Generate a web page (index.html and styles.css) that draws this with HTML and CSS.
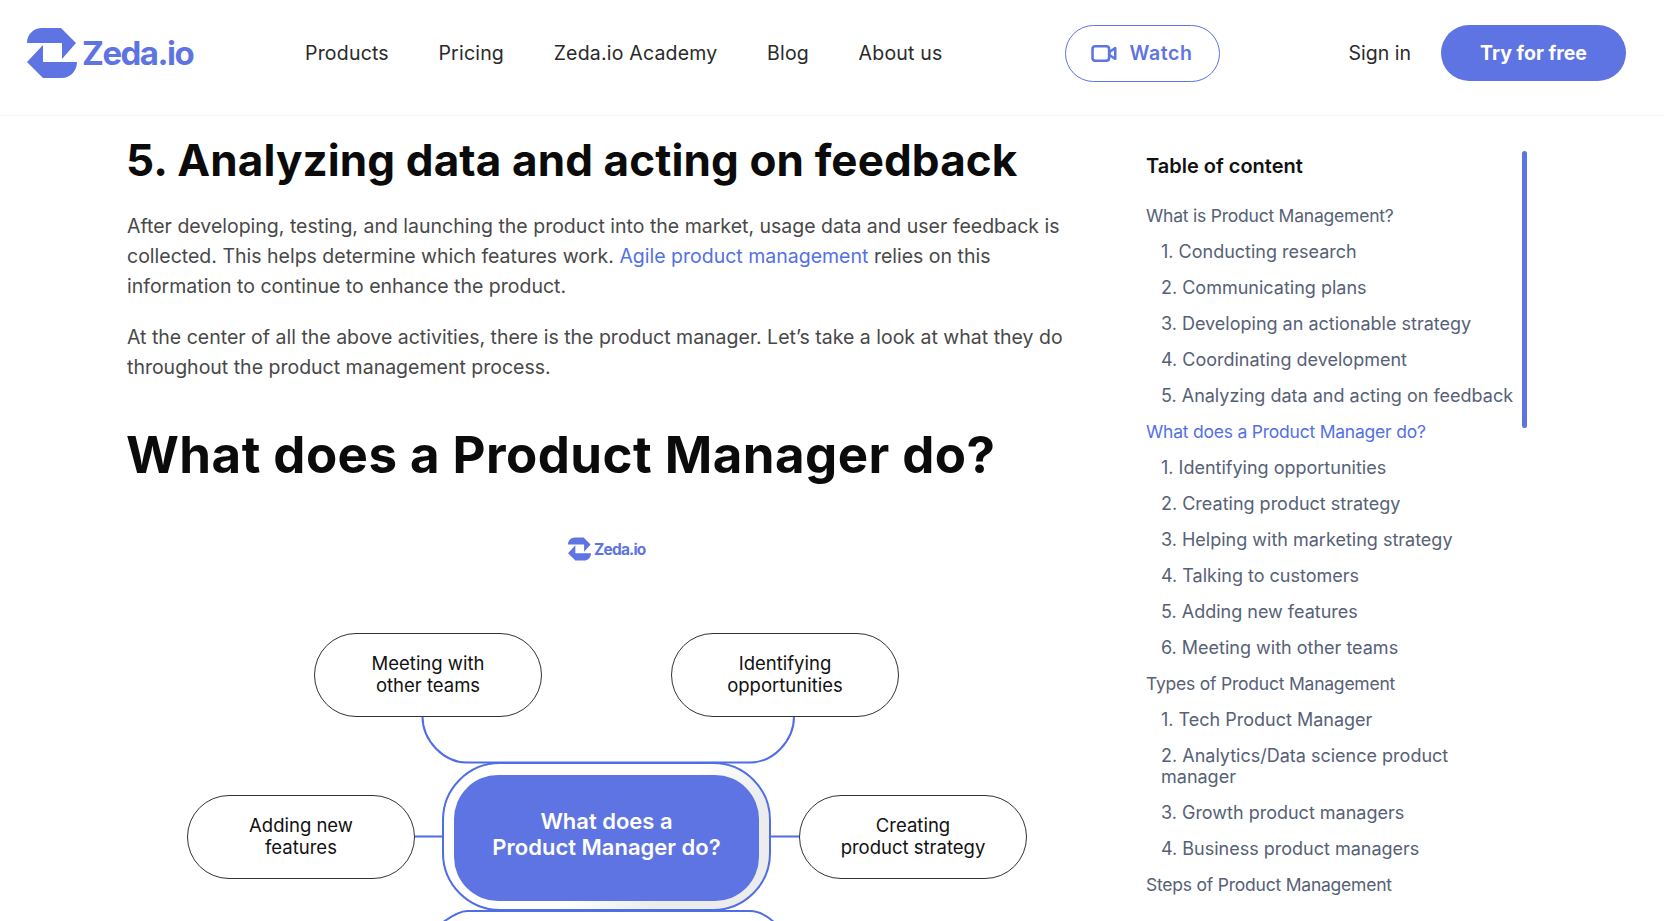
FILE: index.html
```html
<!DOCTYPE html>
<html lang="en">
<head>
<meta charset="utf-8">
<title>What does a Product Manager do? | Zeda.io</title>
<link rel="stylesheet" href="styles.css">
</head>
<body>
<header class="topbar">
  <a class="brand" href="#">
    <svg class="brand-mark" viewBox="0 0 50 50" aria-hidden="true"><path d="M0 15C0 6 7 0 15 0H34L49 15L35 31V15Z"/><path d="M50 34C50 43 43 50 35 50H16L0 34L16 17V34Z"/></svg>
    <span class="brand-name">Zeda.io</span>
  </a>
  <nav class="nav">
    <a href="#">Products</a>
    <a href="#">Pricing</a>
    <a href="#">Zeda.io Academy</a>
    <a href="#">Blog</a>
    <a href="#">About us</a>
  </nav>
  <a class="watch" href="#">
    <svg class="watch-icon" viewBox="0 0 24 16" aria-hidden="true"><rect x="1.2" y="1.2" width="15.6" height="13.6" rx="2.6"/><path d="M17 6.6L22.6 3V13L17 9.4Z"/></svg>
    Watch
  </a>
  <a class="signin" href="#">Sign in</a>
  <a class="try" href="#">Try for free</a>
</header>

<div class="page">
  <main class="article">
    <h3>5. Analyzing data and acting on feedback</h3>
    <p>After developing, testing, and launching the product into the market, usage data and user feedback is<br>collected. This helps determine which features work. <a href="#">Agile product management</a> relies on this<br>information to continue to enhance the product.</p>
    <p>At the center of all the above activities, there is the product manager. Let’s take a look at what they do<br>throughout the product management process.</p>
    <h2>What does a Product Manager do?</h2>
    <figure class="diagram">
      <div class="mini-brand">
        <svg class="mini-mark" viewBox="0 0 50 50" aria-hidden="true"><path d="M0 15C0 6 7 0 15 0H34L49 15L35 31V15Z"/><path d="M50 34C50 43 43 50 35 50H16L0 34L16 17V34Z"/></svg>
        <span class="mini-name">Zeda.io</span>
      </div>
      <svg class="links" viewBox="0 0 900 391" aria-hidden="true">
        <path d="M295.5 186.5C295.5 211 317 232.5 340 232.5H623C646 232.5 667 211 667 186.5"/>
        <path d="M287 306.5H316"/>
        <path d="M643 306.5H673"/>
        <path d="M312 395C318 391 330 381 340 381H623C633 381 643 388 650 395"/>
      </svg>
      <div class="halo"></div>
      <div class="hub">What does a<br>Product Manager do?</div>
      <div class="pill pill-meeting">Meeting with<br>other teams</div>
      <div class="pill pill-identify">Identifying<br>opportunities</div>
      <div class="pill pill-adding">Adding new<br>features</div>
      <div class="pill pill-creating">Creating<br>product strategy</div>
    </figure>
  </main>

  <aside class="toc">
    <div class="toc-thumb"></div>
    <h4>Table of content</h4>
    <ul>
      <li><a href="#">What is Product Management?</a></li>
      <li class="sub"><a href="#">1. Conducting research</a></li>
      <li class="sub"><a href="#">2. Communicating plans</a></li>
      <li class="sub"><a href="#">3. Developing an actionable strategy</a></li>
      <li class="sub"><a href="#">4. Coordinating development</a></li>
      <li class="sub"><a href="#">5. Analyzing data and acting on feedback</a></li>
      <li class="active"><a href="#">What does a Product Manager do?</a></li>
      <li class="sub"><a href="#">1. Identifying opportunities</a></li>
      <li class="sub"><a href="#">2. Creating product strategy</a></li>
      <li class="sub"><a href="#">3. Helping with marketing strategy</a></li>
      <li class="sub"><a href="#">4. Talking to customers</a></li>
      <li class="sub"><a href="#">5. Adding new features</a></li>
      <li class="sub"><a href="#">6. Meeting with other teams</a></li>
      <li><a href="#">Types of Product Management</a></li>
      <li class="sub"><a href="#">1. Tech Product Manager</a></li>
      <li class="sub"><a href="#">2. Analytics/Data science product<br>manager</a></li>
      <li class="sub"><a href="#">3. Growth product managers</a></li>
      <li class="sub"><a href="#">4. Business product managers</a></li>
      <li><a href="#">Steps of Product Management</a></li>
    </ul>
  </aside>
</div>
</body>
</html>
```

FILE: styles.css
```css
* { box-sizing: border-box; }
html, body { margin: 0; height: 100%; overflow: hidden; background: #fff; }
body { font-family: Inter, "Noto Sans", Arial, sans-serif; color: #222; }
a { color: inherit; text-decoration: none; }

.topbar {
  height: 116px;
  display: flex;
  align-items: center;
  padding: 0 38px 9px 27px;
  border-bottom: 1px solid #f5f5f5;
  font-size: 19.5px;
}
.brand { display: flex; align-items: center; gap: 5px; width: 278px; }
.brand-mark { width: 50px; height: 50px; fill: #5e74e2; }
.brand-name { font-size: 33px; font-weight: 700; letter-spacing: -1.5px; color: #5e74e2; }
.nav { display: flex; gap: 49.6px; color: #2a2a2a; letter-spacing: .2px; }
.watch {
  margin-left: 122px;
  width: 155px;
  height: 57px;
  display: flex;
  align-items: center;
  justify-content: center;
  gap: 12px;
  border: 1px solid #5e74e2;
  border-radius: 29px;
  color: #5e74e2;
  font-weight: 600;
  letter-spacing: .6px;
}
.watch-icon { width: 26px; height: 17px; fill: none; stroke: #5e74e2; stroke-width: 2.4; stroke-linejoin: round; }
.signin { margin-left: auto; color: #2a2a2a; }
.try {
  margin-left: 30px;
  width: 185px;
  height: 56px;
  display: flex;
  align-items: center;
  justify-content: center;
  border-radius: 28px;
  background: #5e74e2;
  color: #fff;
  font-weight: 700;
}

.page { display: flex; padding-left: 126px; }
.article { width: 941px; flex: none; }
h3 {
  margin: 14px 0 0;
  font-size: 44px;
  line-height: 60px;
  font-weight: 650;
  letter-spacing: .12px;
  color: #0b0b0b;
}
.article p {
  margin: 21px 0 0 1px;
  font-size: 19.5px;
  line-height: 30px;
  letter-spacing: 0;
  color: #484848;
}
.article p + p { margin-top: 21px; }
.article p a { color: #5470e6; }
h2 {
  margin: 39px 0 0;
  font-size: 51px;
  line-height: 68px;
  font-weight: 650;
  letter-spacing: .45px;
  color: #0b0b0b;
}
.diagram { position: relative; margin: 41px 0 0 1px; height: 391px; }
.links {
  position: absolute;
  inset: 0;
  width: 900px;
  height: 391px;
  overflow: hidden;
  fill: none;
  stroke: #4f6de6;
  stroke-width: 2;
}
.mini-brand { position: absolute; left: 441px; top: 7px; display: flex; align-items: center; gap: 3px; }
.mini-mark { width: 23px; height: 24px; fill: #5e74e2; }
.mini-name { font-size: 15.5px; font-weight: 700; letter-spacing: -.8px; color: #5e74e2; }
.halo {
  position: absolute;
  left: 315px;
  top: 232px;
  width: 329px;
  height: 149px;
  border: 2px solid #4f6de6;
  border-radius: 58px;
  background: linear-gradient(135deg, #fff 55%, #ececec 75%);
}
.hub {
  position: absolute;
  left: 327px;
  top: 245px;
  width: 305px;
  height: 126px;
  padding-bottom: 8px;
  border-radius: 44px;
  background: #5e74e2;
  color: #fff;
  display: flex;
  align-items: center;
  justify-content: center;
  text-align: center;
  font-size: 22px;
  line-height: 26.5px;
  font-weight: 600;
}
.pill {
  position: absolute;
  width: 228px;
  height: 84px;
  padding-bottom: 2px;
  display: flex;
  align-items: center;
  justify-content: center;
  text-align: center;
  border: 1px solid #333;
  border-radius: 42px;
  background: #fff;
  color: #111;
  font-size: 18.5px;
  line-height: 22.5px;
}
.pill-meeting { left: 187px; top: 103px; }
.pill-identify { left: 544px; top: 103px; }
.pill-adding { left: 60px; top: 265px; }
.pill-creating { left: 672px; top: 265px; }

.toc { position: relative; flex: none; width: 380px; margin-left: 79px; padding-top: 36px; }
.toc-thumb {
  position: absolute;
  left: 376px;
  top: 35px;
  width: 5px;
  height: 277px;
  border-radius: 3px;
  background: #5e74e2;
}
.toc h4 { margin: 0 0 17px; font-size: 20px; line-height: 28px; font-weight: 600; color: #111; }
.toc ul { list-style: none; margin: 0; padding: 0; font-size: 17.5px; line-height: 21px; letter-spacing: -.22px; color: #566176; }
.toc li { padding: 7.5px 0; }
.toc li.sub { padding-left: 15px; font-size: 18px; letter-spacing: 0; }
.toc li.active { color: #5470e6; }
```
